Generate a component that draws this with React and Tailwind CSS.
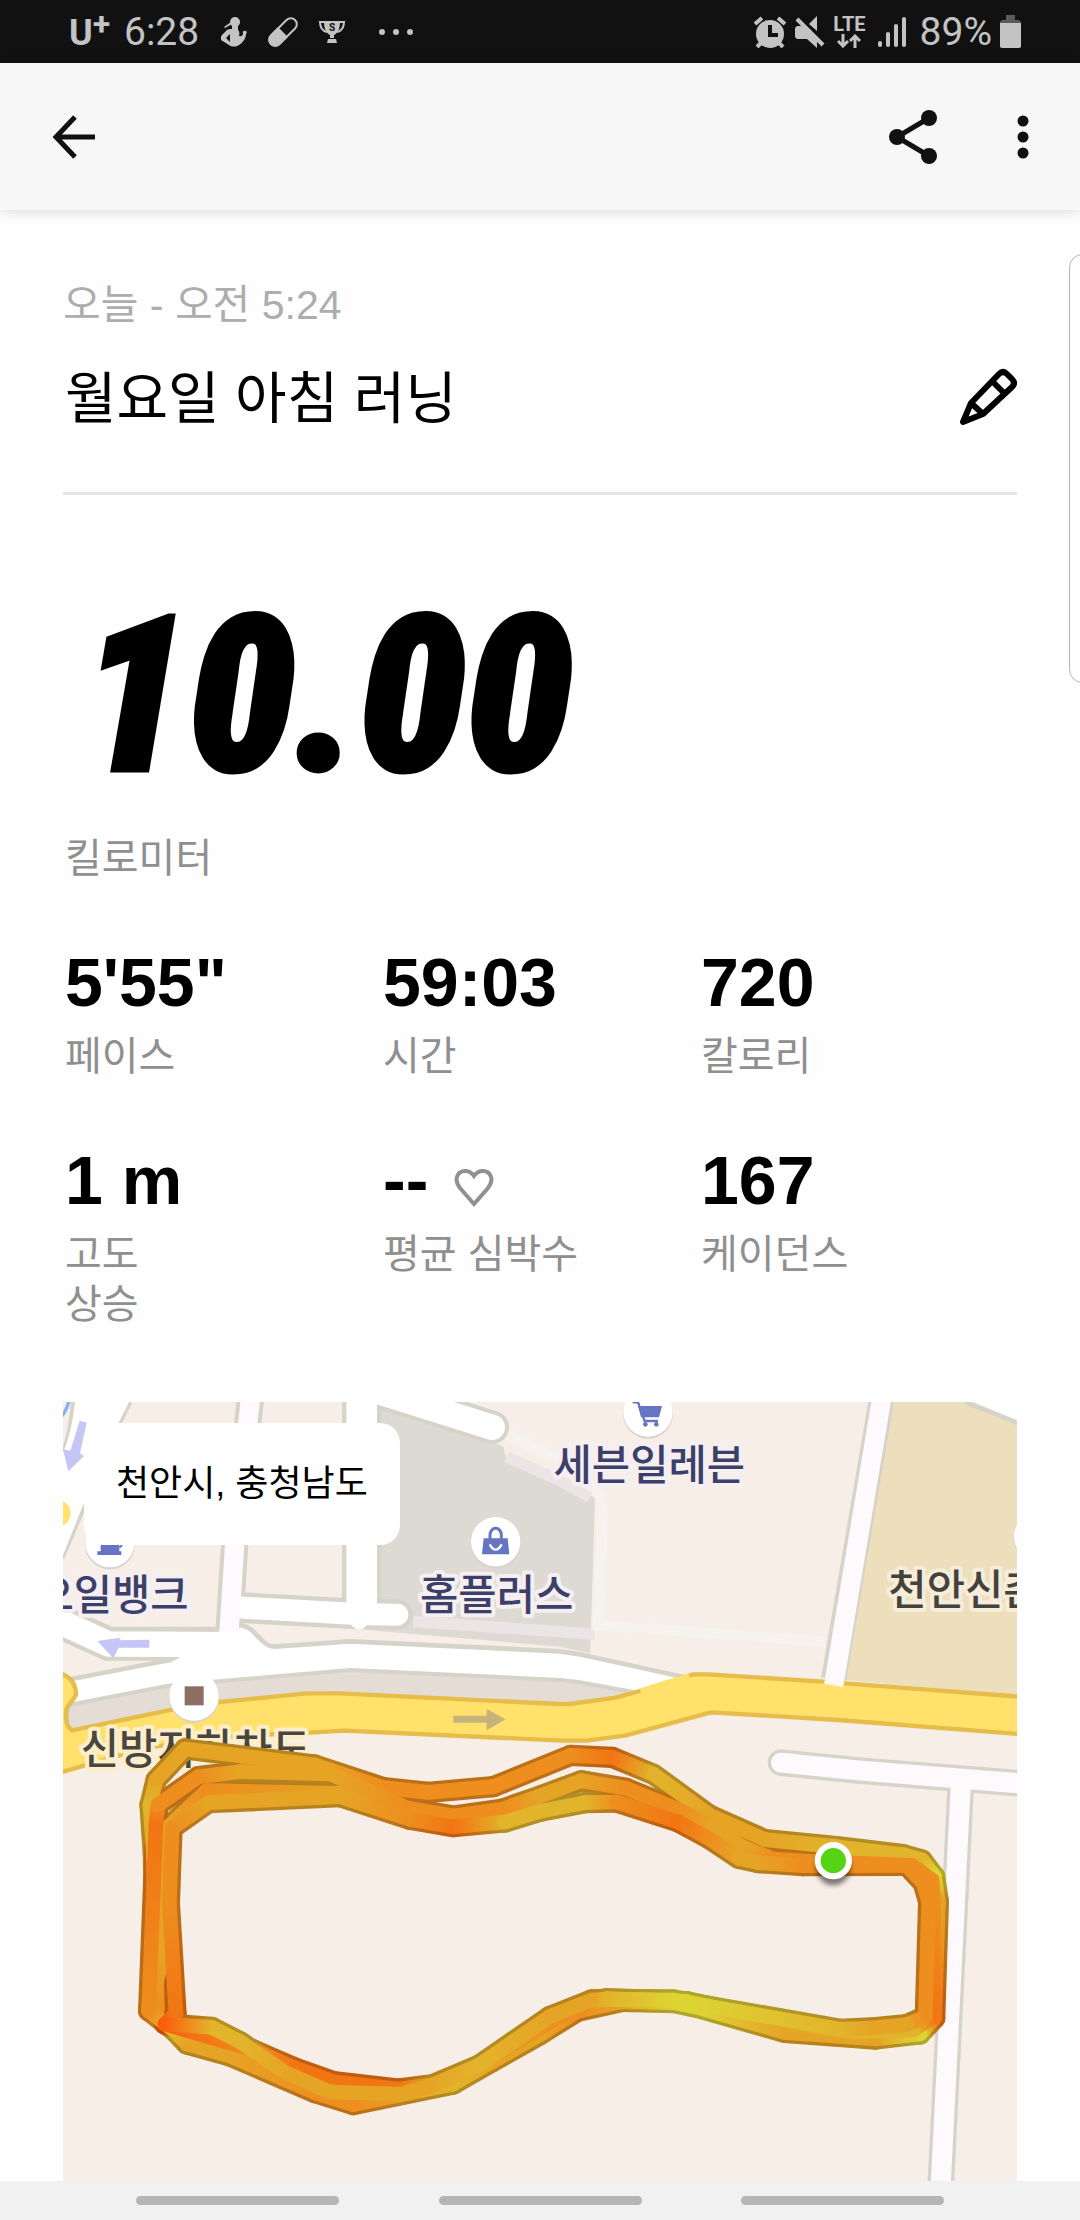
import React from "react";

const KR = 'font-["Liberation_Sans","Noto_Sans_CJK_KR",sans-serif]';

/* ---------- Status bar ---------- */

function RunnerIcon() {
  return (
    <svg viewBox="0 0 26 32" className="h-8 w-[26px]" fill="currentColor" aria-hidden="true">
      <circle cx="14" cy="6" r="5" />
      <path d="M11 9h6v5c1 1 2 3 1 6 3 1 4-1 4-3-1-1 1-3 3-2 1 1 1 2 0 3 0 5-4 9-7 11-3 2-7 2-10 0L0 24c-1-2 0-4 1-5l5-5c1-1 3-1 5-1z" />
      <path d="M9 18l-4 4 4 4z" fill="#111" />
      <path d="M3 11l7-5 1 2-7 4z" />
    </svg>
  );
}

function PillIcon() {
  return (
    <svg viewBox="0 0 32 32" className="size-8" aria-hidden="true">
      <g transform="rotate(45 16 16)">
        <rect x="10" y="-1" width="12" height="34" rx="6" fill="none" stroke="currentColor" strokeWidth="2" />
        <path d="M9 16h14v11a7 7 0 0 1-14 0z" fill="currentColor" />
      </g>
    </svg>
  );
}

function TrophyIcon() {
  return (
    <svg viewBox="0 0 26 22" className="h-[22px] w-[26px]" aria-hidden="true">
      <path d="M5 0h16c0 8-2 12-6 14v3h-4v-3C7 12 5 8 5 0z" fill="currentColor" />
      <path d="M6 1H1c0 6 3 9 7 10M20 1h5c0 6-3 9-7 10" fill="none" stroke="currentColor" strokeWidth="2" />
      <path d="M9 18h8l1 4H8z" fill="currentColor" />
      <text x="13" y="10" textAnchor="middle" fontSize="10" fontWeight="700" fill="#111" className="font-[Roboto,sans-serif]">S</text>
    </svg>
  );
}

function AlarmIcon() {
  return (
    <svg viewBox="0 0 34 32" className="h-8 w-[34px]" fill="none" stroke="currentColor" aria-hidden="true">
      <circle cx="17" cy="18" r="14" fill="currentColor" stroke="none" />
      <path d="M2 8l7-6M32 8l-7-6" strokeWidth="4" />
      <path d="M8 27l-4 4M26 27l4 4" strokeWidth="4" />
      <path d="M17 9v10h8" stroke="#111" strokeWidth="4" />
    </svg>
  );
}

function MuteIcon() {
  return (
    <svg viewBox="0 0 30 32" className="h-8 w-[30px]" aria-hidden="true">
      <path d="M0 12l2-2h5l15 15v7l-10-9H2l-2-2z" fill="currentColor" />
      <path d="M22 0v15l-8-7z" fill="currentColor" />
      <path d="M3 1l27 27" stroke="#111" strokeWidth="3" />
      <path d="M2 3l26 26" stroke="currentColor" strokeWidth="4" />
    </svg>
  );
}

function LteArrows() {
  return (
    <svg viewBox="0 0 24 14" className="h-[14px] w-6" fill="none" stroke="currentColor" strokeWidth="3" aria-hidden="true">
      <path d="M6 0v11M1 7l5 5 5-5M18 14V3M13 7l5-5 5 5" />
    </svg>
  );
}

function SignalIcon() {
  return (
    <svg viewBox="0 0 28 30" className="h-[30px] w-7" fill="currentColor" aria-hidden="true">
      <rect x="0" y="24" width="4" height="6" rx="2" />
      <rect x="8" y="15" width="4" height="15" rx="2" />
      <rect x="16" y="7" width="4" height="23" rx="2" />
      <rect x="24" y="0" width="4" height="30" rx="2" />
    </svg>
  );
}

function BatteryIcon() {
  return (
    <svg viewBox="0 0 21 33" className="h-[33px] w-[21px]" aria-hidden="true">
      <path d="M6 0h9v5h4l2 2v3H0V7l2-2h4z" fill="#5b5b5b" />
      <path d="M0 8h21v23a2 2 0 0 1-2 2H2a2 2 0 0 1-2-2z" fill="currentColor" />
    </svg>
  );
}

function StatusBar() {
  return (
    <div className="flex h-[63px] items-center justify-between bg-[#111111] pr-[59px] pl-[69px] font-[Roboto,sans-serif] text-[#c3c3c3]">
      <div className="flex items-center">
        <div className="flex h-10 w-[55px] items-start leading-[42px] font-bold">
          <span className="text-[36px]">U</span>
          <span className="text-[32px] leading-6">+</span>
        </div>
        <time className="text-[39px] leading-[50px]">6:28</time>
        <div className="flex items-center pl-[22px]">
          <RunnerIcon />
          <div className="pl-5"><PillIcon /></div>
          <div className="pl-5"><TrophyIcon /></div>
          <div className="flex gap-2 pl-[34px]">
            <i className="size-1.5 rounded-full bg-current" />
            <i className="size-1.5 rounded-full bg-current" />
            <i className="size-1.5 rounded-full bg-current" />
          </div>
        </div>
      </div>
      <div className="flex items-center">
        <AlarmIcon />
        <div className="pl-2"><MuteIcon /></div>
        <div className="flex flex-col items-center gap-0.5 pl-2 pr-3">
          <span className="text-[20px] leading-4 font-bold">LTE</span>
          <LteArrows />
        </div>
        <SignalIcon />
        <span className="pr-2 pl-3.5 text-[39px] leading-[50px]">89%</span>
        <BatteryIcon />
      </div>
    </div>
  );
}

/* ---------- App bar ---------- */

function AppBar() {
  return (
    <header className="flex h-[147px] items-center justify-between bg-[#f7f7f7] pr-[51px] pl-[52px] text-[#111111] shadow-[0_2px_12px_rgba(0,0,0,0.14)]">
      <button type="button" aria-label="뒤로">
        <svg viewBox="0 0 44 44" className="size-11" fill="none" stroke="currentColor" strokeWidth="5">
          <path d="M43 22H4M23 2L4 22l19 20" />
        </svg>
      </button>
      <div className="flex items-center gap-20">
        <button type="button" aria-label="공유">
          <svg viewBox="0 0 48 54" className="h-[54px] w-12" fill="currentColor">
            <path d="M40 8L8 27l32 19" fill="none" stroke="currentColor" strokeWidth="5" />
            <circle cx="40" cy="8" r="8" />
            <circle cx="8" cy="27" r="8" />
            <circle cx="40" cy="46" r="8" />
          </svg>
        </button>
        <button type="button" aria-label="더보기">
          <svg viewBox="0 0 24 88" className="h-11 w-3" fill="currentColor">
            <circle cx="12" cy="12" r="11" />
            <circle cx="12" cy="44" r="11" />
            <circle cx="12" cy="76" r="11" />
          </svg>
        </button>
      </div>
    </header>
  );
}

/* ---------- Map ---------- */

const AMBER = "#e6a425";
const ORANGE = "#ed8e1e";
const TANGERINE = "#f27514";
const RED = "#f9600e";
const GOLD = "#e2b42b";
const YELLOW = "#dcd433";

const shade = (hex) =>
  "#" +
  [1, 3, 5]
    .map((i) => Math.round(parseInt(hex.slice(i, i + 2), 16) * 0.79).toString(16).padStart(2, "0"))
    .join("");

const LAPS = [
  [
    [352, 870, ORANGE], [340, 400, AMBER], [330, 255, GOLD], [348, 180, AMBER], [435, 87, AMBER], [825, 135, AMBER],
    [1030, 203, ORANGE], [1165, 217, ORANGE], [1360, 200, ORANGE], [1592, 106, ORANGE], [1717, 112, TANGERINE],
    [1841, 163, GOLD], [2010, 286, AMBER], [2175, 359, AMBER], [2390, 380, GOLD], [2590, 404, GOLD], [2646, 420, GOLD],
    [2684, 470, YELLOW], [2695, 545, AMBER], [2684, 895, TANGERINE], [2640, 942, YELLOW], [2507, 957, AMBER], [2233, 937, AMBER],
    [1986, 866, YELLOW], [1903, 848, YELLOW], [1748, 844, AMBER], [1612, 874, ORANGE], [1500, 944, AMBER], [1355, 1026, AMBER],
    [1240, 1092, GOLD], [940, 1154, ORANGE], [825, 1118, ORANGE], [570, 1008, AMBER], [440, 972, AMBER], [400, 930, GOLD], [326, 872, ORANGE],
  ],
  [
    [326, 872, ORANGE], [372, 700, AMBER], [375, 330, AMBER], [500, 212, ORANGE], [900, 220, AMBER], [1110, 285, ORANGE], [1240, 305, ORANGE],
  ],
  [
    [326, 872, ORANGE], [348, 310, TANGERINE], [354, 255, ORANGE], [475, 170, ORANGE], [600, 155, AMBER], [872, 162, AMBER],
    [1105, 265, ORANGE], [1240, 288, ORANGE], [1385, 268, ORANGE], [1500, 228, AMBER], [1624, 182, AMBER], [1758, 205, ORANGE],
    [1913, 268, ORANGE], [2017, 322, AMBER], [2110, 382, AMBER], [2200, 417, ORANGE], [2306, 424, ORANGE], [2616, 436, ORANGE],
    [2676, 480, ORANGE], [2680, 545, ORANGE], [2678, 890, TANGERINE], [2620, 930, GOLD], [2440, 935, GOLD], [2233, 910, AMBER],
    [1940, 845, YELLOW], [1700, 836, GOLD], [1640, 850, ORANGE], [1540, 900, ORANGE],
    [1330, 1030, AMBER], [1180, 1094, AMBER], [1075, 1107, TANGERINE], [880, 1085, TANGERINE], [765, 1044, TANGERINE], [640, 990, ORANGE], [375, 912, RED],
  ],
  [
    [375, 912, RED], [408, 880, TANGERINE], [388, 550, ORANGE], [396, 325, ORANGE], [505, 248, AMBER], [900, 230, AMBER],
    [1110, 298, ORANGE], [1240, 320, TANGERINE], [1395, 306, GOLD], [1500, 274, GOLD], [1634, 248, GOLD], [1730, 246, ORANGE],
    [1913, 305, TANGERINE], [2006, 355, ORANGE], [2096, 415, AMBER], [2155, 428, AMBER], [2290, 437, ORANGE], [2600, 436, ORANGE],
    [2650, 490, ORANGE], [2666, 545, ORANGE], [2656, 890, ORANGE], [2600, 914, AMBER], [2492, 924, AMBER], [2400, 928, GOLD],
    [1944, 848, YELLOW], [1900, 840, YELLOW], [1700, 838, GOLD], [1655, 840, AMBER], [1528, 890, AMBER], [1310, 1040, GOLD],
    [1165, 1100, AMBER], [1080, 1122, AMBER], [870, 1116, AMBER], [740, 1060, AMBER], [600, 965, GOLD], [515, 922, GOLD], [375, 912, RED],
  ],
];

const SEGMENTS = LAPS.flatMap((lap, l) =>
  lap.slice(1).map((to, i) => ({ id: `lap${l}-${i}`, from: lap[i], to })),
);

function Route() {
  return (
    <g transform="translate(0 990)" strokeLinecap="round">
      <defs>
        {SEGMENTS.map(({ id, from, to }) => (
          <React.Fragment key={id}>
            <linearGradient id={id} gradientUnits="userSpaceOnUse" x1={from[0]} y1={from[1]} x2={to[0]} y2={to[1]}>
              <stop offset="0" stopColor={from[2]} />
              <stop offset="1" stopColor={to[2]} />
            </linearGradient>
            <linearGradient id={`${id}-edge`} gradientUnits="userSpaceOnUse" x1={from[0]} y1={from[1]} x2={to[0]} y2={to[1]}>
              <stop offset="0" stopColor={shade(from[2])} />
              <stop offset="1" stopColor={shade(to[2])} />
            </linearGradient>
          </React.Fragment>
        ))}
      </defs>
      {SEGMENTS.map(({ id, from, to }) => (
        <path key={id} d={`M${from[0]} ${from[1]}L${to[0]} ${to[1]}`} stroke={`url(#${id}-edge)`} strokeWidth="64" />
      ))}
      {SEGMENTS.map(({ id, from, to }) => (
        <path key={id} d={`M${from[0]} ${from[1]}L${to[0]} ${to[1]}`} stroke={`url(#${id})`} strokeWidth="44" />
      ))}
    </g>
  );
}

const PLACE = 'font-["Noto_Sans_CJK_KR",sans-serif] text-[125px] font-medium';

function Place({ x, y, anchor = "middle", color = "#3c4068", halo = "#f6eff2", children }) {
  return (
    <text x={x} y={y} textAnchor={anchor} fill={color} stroke={halo} strokeWidth="24" strokeLinejoin="round" paintOrder="stroke" className={PLACE}>
      {children}
    </text>
  );
}

function Pin({ x, y, children }) {
  return (
    <g transform={`translate(${x} ${y})`}>
      <circle cy="5" r="75" fill="#d9d2cb" />
      <circle r="74" fill="#fff" />
      {children}
    </g>
  );
}

function RunMap() {
  const casing = "#d6d3c8";
  return (
    <svg viewBox="69 36 2862 2337" className="block w-full" fill="none" role="img" aria-label="러닝 경로 지도">
      <rect x="69" y="36" width="2862" height="2337" fill="#f7eee7" />

      {/* blocks */}
      <path d="M1010 36h40l340 134 10 40 155 60 85 40 25 15-7 235-8 230-90-20-580-50 30-100z" fill="#dddad4" />
      <path d="M1120 695l440 30 105 8M1400 200l160 72 90 50" stroke="#ece5e5" strokeWidth="34" />
      <path d="M1385 125l175 85 95 75q34 25 32 110l-12 310 680 50" stroke="#f6f2ed" strokeWidth="32" />
      <path d="M2559 36h222l150 60v820l-520-46z" fill="#eedfbc" />
      <path d="M2790 30l150 65V36z" fill="#fff" />
      <path d="M2775 36l160 64" stroke={casing} strokeWidth="14" />

      {/* side streets, casing below surface */}
      <g stroke={casing}>
        <path d="M632 20L584 465 566 740" strokeWidth="82" />
        <path d="M965 20v630" strokeWidth="118" />
        <path d="M590 652l360 20 122 2" strokeWidth="92" strokeLinecap="round" />
        <path d="M20 670l50 30 135 61h380" strokeWidth="102" />
        <path d="M100 36q-8 90-32 160M270 36L232 112 132 350 66 505" strokeWidth="14" />
        <path d="M1000 0l357 112" strokeWidth="100" strokeLinecap="round" />
      </g>
      <path d="M105 36h162l-40 80-100 235-58 145V190q28-70 36-154z" fill="#fff" />
      <path d="M1000 0l357 112" stroke="#fff" strokeWidth="76" strokeLinecap="round" />

      {/* frontage road */}
      <path d="M90 945L90 868l300-58 210-105q30 5 50 30 30 35 52 35l228-16 630 30 65 10 330 72-145 65-210-40-40-5-630-30-370 27z" fill="#fff" stroke={casing} strokeWidth="14" strokeLinejoin="round" />
      <path d="M85 945l300-58 545-47 630 30 50 5 220 40-240 40-720-45-340 50-430 60q-25-5-20-30z" fill="#e5ddd5" stroke={casing} strokeWidth="12" />
      <path d="M20 670l50 30 135 62 395 2" stroke="#fff" strokeWidth="76" strokeLinejoin="round" />
      <path d="M590 652l360 20 122 2" stroke="#fff" strokeWidth="66" strokeLinecap="round" />
      <path d="M965 20v650" stroke="#fff" strokeWidth="92" />
      <circle cx="957" cy="690" r="28" fill="#fff" />
      <path d="M632 20L584 465 566 740" stroke="#fdf9fd" strokeWidth="58" />
      <path d="M540 722h60l45 30 45 34v30H400z" fill="#fff" />

      {/* main road */}
      <path d="M60 850q48 15 48 65l-28 40q-8 50 16 66l304-63 140-22 260-26h100l660 32h28l139-19 62-17 171-53h46l341 22 591 45v112l-543-42-382-23-258 70-114 15h-74l-654-30-90 5-210 10-290 35-260 75z" fill="#ffe16b" stroke="#e6bc4a" strokeWidth="13" strokeLinejoin="round" />
      <path d="M1802 904l146-45" stroke="#ffe16b" strokeWidth="18" />
      <circle cx="52" cy="370" r="40" fill="#ffe16b" />
      <path d="M88 30q-8 30-22 48" stroke="#7db6f7" strokeWidth="10" />

      {/* right-hand roads */}
      <path d="M2526 20L2381 868" stroke={casing} strokeWidth="76" />
      <path d="M2526 20L2381 886" stroke="#fdf9fd" strokeWidth="58" />
      <g stroke={casing} strokeWidth="80">
        <path d="M2223 1118l240 24 500 40" strokeLinecap="round" />
        <path d="M2763 1170l-62 1240" />
      </g>
      <g stroke="#fdf9fd" strokeWidth="60">
        <path d="M2223 1118l240 24 500 40" strokeLinecap="round" />
        <path d="M2763 1170l-62 1240" />
      </g>

      {/* one-way arrows */}
      <path d="M119 92l21 6-20 92 12 8-47 46-16-66 22 4zM328 749v24h-92l-16 32-48-52 70-10-4 8z" fill="#c5c6f5" />
      <path d="M1240 977h100v-20l57 31-57 33v-23h-100z" fill="#c6b37c" />

      {/* places */}
      <Pin x={1824} y={66}>
        <path d="M-30-18h72l-9 34h-54z" fill="#6674c4" />
        <path d="M-46-29h16l20 56h40" stroke="#6674c4" strokeWidth="7" />
        <circle cx="-8" cy="37" r="7" fill="#6674c4" />
        <circle cx="25" cy="37" r="7" fill="#6674c4" />
      </Pin>
      <Pin x={1367} y={455}>
        <path d="M-36-10h72l5 48h-82z" fill="#6674c4" />
        <path d="M-17-6v-14a17 20 0 0 1 34 0v14" stroke="#6674c4" strokeWidth="9" />
        <path d="M-18 8q18 32 36 0" stroke="#fff" strokeWidth="7" />
      </Pin>
      <Pin x={210} y={458}>
        <path d="M-28-40h56v66h-56zM-38 26h72v11h-72z" fill="#6674c4" />
        <path d="M28-20h10q4 30-10 34" stroke="#6674c4" strokeWidth="6" />
      </Pin>
      <Pin x={462} y={918}>
        <rect x="-28" y="-29" width="57" height="57" fill="#8d6e63" />
      </Pin>
      <Pin x={2996} y={440} />

      <Place x={1828} y={269}>세븐일레븐</Place>
      <Place x={1370} y={659}>홈플러스</Place>
      <Place x={446} y={659} anchor="end">오일뱅크</Place>
      <Place x={2545} y={644} anchor="start" color="#45423e" halo="#f5edd9">천안신촌</Place>
      <Place x={122} y={1123} anchor="start" color="#4a463f" halo="#fbefcb">신방지하차도</Place>

      <Route />

      {/* start marker */}
      <ellipse cx="2380" cy="1432" rx="52" ry="54" fill="#000" opacity="0.5" className="blur-[8px]" />
      <circle cx="2380" cy="1412" r="56" fill="#fff" />
      <circle cx="2380" cy="1412" r="38" fill="#55d415" />
    </svg>
  );
}

/* ---------- Content ---------- */

function Stat({ value, label, children }) {
  return (
    <div className="flex flex-col-reverse justify-end gap-3.5 pl-0.5">
      <dt className="text-[40px] leading-[50px] whitespace-pre-line text-[#8f8f8f]">{label}</dt>
      <dd className="flex items-center gap-[26px] text-[68px] leading-[70px] font-bold text-black">
        {value}
        {children}
      </dd>
    </div>
  );
}

function HeartIcon() {
  return (
    <svg viewBox="0 0 40 40" className="mt-4 size-10" fill="none" stroke="#909090" strokeWidth="4" aria-hidden="true">
      <path d="M20 36L6 20C-1 11 4 3 11 3c5 0 7 2 9 5 2-3 4-5 9-5 7 0 12 8 5 17z" />
    </svg>
  );
}

export default function App() {
  return (
    <div className={`relative flex min-h-screen flex-col overflow-hidden bg-[#fefefe] ${KR}`}>
      <StatusBar />
      <AppBar />

      <main className="px-[63px] pt-[70px]">
        <section className="border-b-[3px] border-[#e5e5e5] pb-[62px]">
          <p className="text-[41px] leading-[50px] text-[#adadad]">오늘 - 오전 5:24</p>
          <div className="flex items-center justify-between pt-[38px]">
            <h1 className="pl-0.5 text-[56px] leading-[62px] text-black">월요일 아침 러닝</h1>
            <button type="button" aria-label="제목 수정" className="pb-1">
              <svg viewBox="0 0 58 58" className="size-[58px]" fill="none" stroke="#000" strokeWidth="6" strokeLinejoin="round">
                <path d="M4 54l8-19L40 6q4-4 8 0l5 5q4 4 0 8L24 46zM12 35l12 11M33 13l12 12" />
              </svg>
            </button>
          </div>
        </section>

        <section className="pt-[102px]">
          <p className='pl-[18px] font-["Roboto_Condensed",Roboto,sans-serif] text-[216px] leading-[200px] font-black text-black italic [-webkit-text-stroke:5px_#000]'>
            10.00
          </p>
          <p className="pt-9 pl-0.5 text-[40px] leading-[50px] text-[#8f8f8f]">킬로미터</p>
        </section>

        <dl className="grid grid-cols-3 gap-y-16 pt-16">
          <Stat value={`5'55"`} label="페이스" />
          <Stat value="59:03" label="시간" />
          <Stat value="720" label="칼로리" />
          <Stat value="1 m" label={"고도\n상승"} />
          <Stat value="--" label="평균 심박수">
            <HeartIcon />
          </Stat>
          <Stat value="167" label="케이던스" />
        </dl>

        <section className="relative mt-[73px]">
          <RunMap />
          <p className="absolute top-[21px] left-[21px] rounded-[20px] bg-white px-8 py-9 text-[36px] leading-[50px] text-black">
            천안시, 충청남도
          </p>
        </section>
      </main>

      <nav aria-label="시스템 탐색" className="flex h-[39px] items-center justify-between bg-[#f1f1f1] px-[136px] pb-px">
        <button type="button" aria-label="최근 앱" className="h-[9px] w-[203px] rounded-full bg-[#b5b5b5]" />
        <button type="button" aria-label="홈" className="h-[9px] w-[203px] rounded-full bg-[#b5b5b5]" />
        <button type="button" aria-label="뒤로 가기" className="h-[9px] w-[203px] rounded-full bg-[#b5b5b5]" />
      </nav>

      {/* edge panel handle */}
      <div className="absolute top-[254px] -right-4 h-[429px] w-[27px] rounded-[18px] border border-[#b4b4b4] bg-white" />
    </div>
  );
}
